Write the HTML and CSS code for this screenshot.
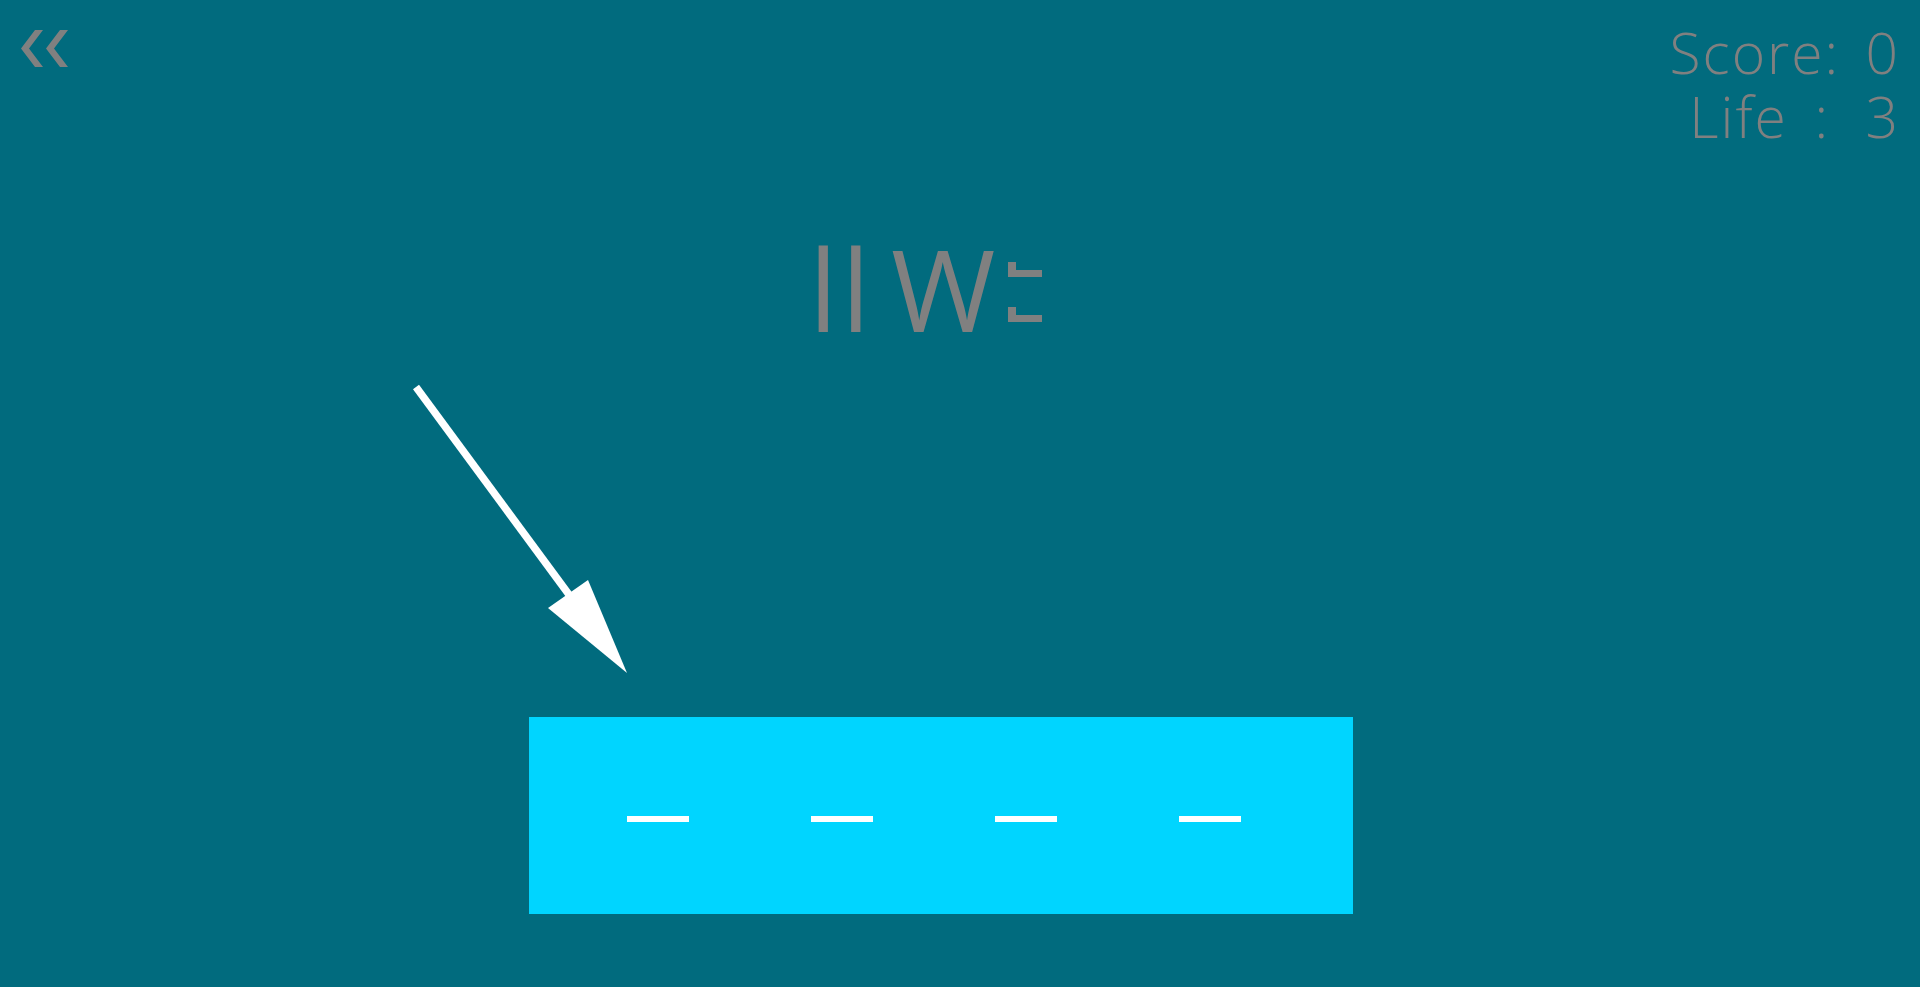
FILE: index.html
```html
<!DOCTYPE html>
<html lang="en">
<head>
<meta charset="utf-8">
<title>Game</title>
<link rel="stylesheet" href="styles.css">
</head>
<body>
<div class="stage">
  <div class="topbar">
    <a class="back" href="#" aria-label="Back">
      <svg width="48" height="39" viewBox="0 0 48 39">
        <polygon points="14,1 22,1 8,19.5 22,38 14,38 0,19.5" fill="#808080"/>
        <polygon points="39,1 47,1 33,19.5 47,38 39,38 25,19.5" fill="#808080"/>
      </svg>
    </a>
    <div class="score">
      <div class="score-line">Score: <span class="num">0</span></div>
      <div class="score-line life">Life : <span class="num">3</span></div>
    </div>
  </div>
  <div class="title">
    <span class="word">ll</span><span class="word word-w">W</span>
    <span class="glyph-e" aria-hidden="true"><i class="seg"></i><i class="seg"></i></span>
  </div>
  <svg class="arrow" width="230" height="300" viewBox="0 0 230 300">
    <line x1="11" y1="7" x2="165" y2="216" stroke="#ffffff" stroke-width="7.5"/>
    <polygon points="143,228 183,200 222,293" fill="#ffffff"/>
  </svg>
  <div class="board">
    <span class="dash"></span>
    <span class="dash"></span>
    <span class="dash"></span>
    <span class="dash"></span>
  </div>
</div>
</body>
</html>
```
FILE: styles.css
```css
html, body {
  margin: 0;
  padding: 0;
}
body {
  background: #016b7e;
  font-family: "Open Sans", "Liberation Sans", sans-serif;
  color: #808080;
  height: 987px;
  overflow: hidden;
}
.stage {
  display: flex;
  flex-direction: column;
  align-items: flex-start;
}
.topbar {
  display: flex;
  justify-content: space-between;
  align-items: flex-start;
  align-self: stretch;
  padding: 20px 22px 0 21px;
}
.back {
  display: block;
  margin-top: 9px;
  line-height: 0;
}
.score {
  display: flex;
  flex-direction: column;
  align-items: flex-end;
  font-size: 57px;
  font-weight: 300;
}
.score-line {
  height: 64px;
  line-height: 64px;
  letter-spacing: 2px;
  white-space: nowrap;
}
.life {
  word-spacing: 10px;
}
.num {
  display: inline-block;
  width: 35px;
  margin-left: 6px;
  text-align: right;
  letter-spacing: 0;
}
.title {
  display: flex;
  align-items: flex-start;
  margin-top: 84px;
  margin-left: 809px;
  height: 113px;
}
.word {
  font-size: 113px;
  line-height: 113px;
  font-weight: 400;
  letter-spacing: 4px;
}
.word-w {
  margin-left: 17px;
  letter-spacing: 0;
}
.glyph-e {
  display: flex;
  flex-direction: column;
  gap: 30px;
  margin-top: 30px;
  margin-left: 13px;
}
.seg {
  display: block;
  width: 26px;
  height: 8px;
  border-left: 8px solid #808080;
  border-bottom: 7px solid #808080;
}
.arrow {
  display: block;
  margin-top: 35px;
  margin-left: 405px;
}
.board {
  display: flex;
  align-items: flex-start;
  gap: 122px;
  box-sizing: border-box;
  width: 824px;
  height: 197px;
  margin-top: 37px;
  margin-left: 529px;
  padding: 99px 0 0 98px;
  background: #00d5ff;
}
.dash {
  display: block;
  width: 62px;
  height: 6px;
  background: #ffffff;
}
```
